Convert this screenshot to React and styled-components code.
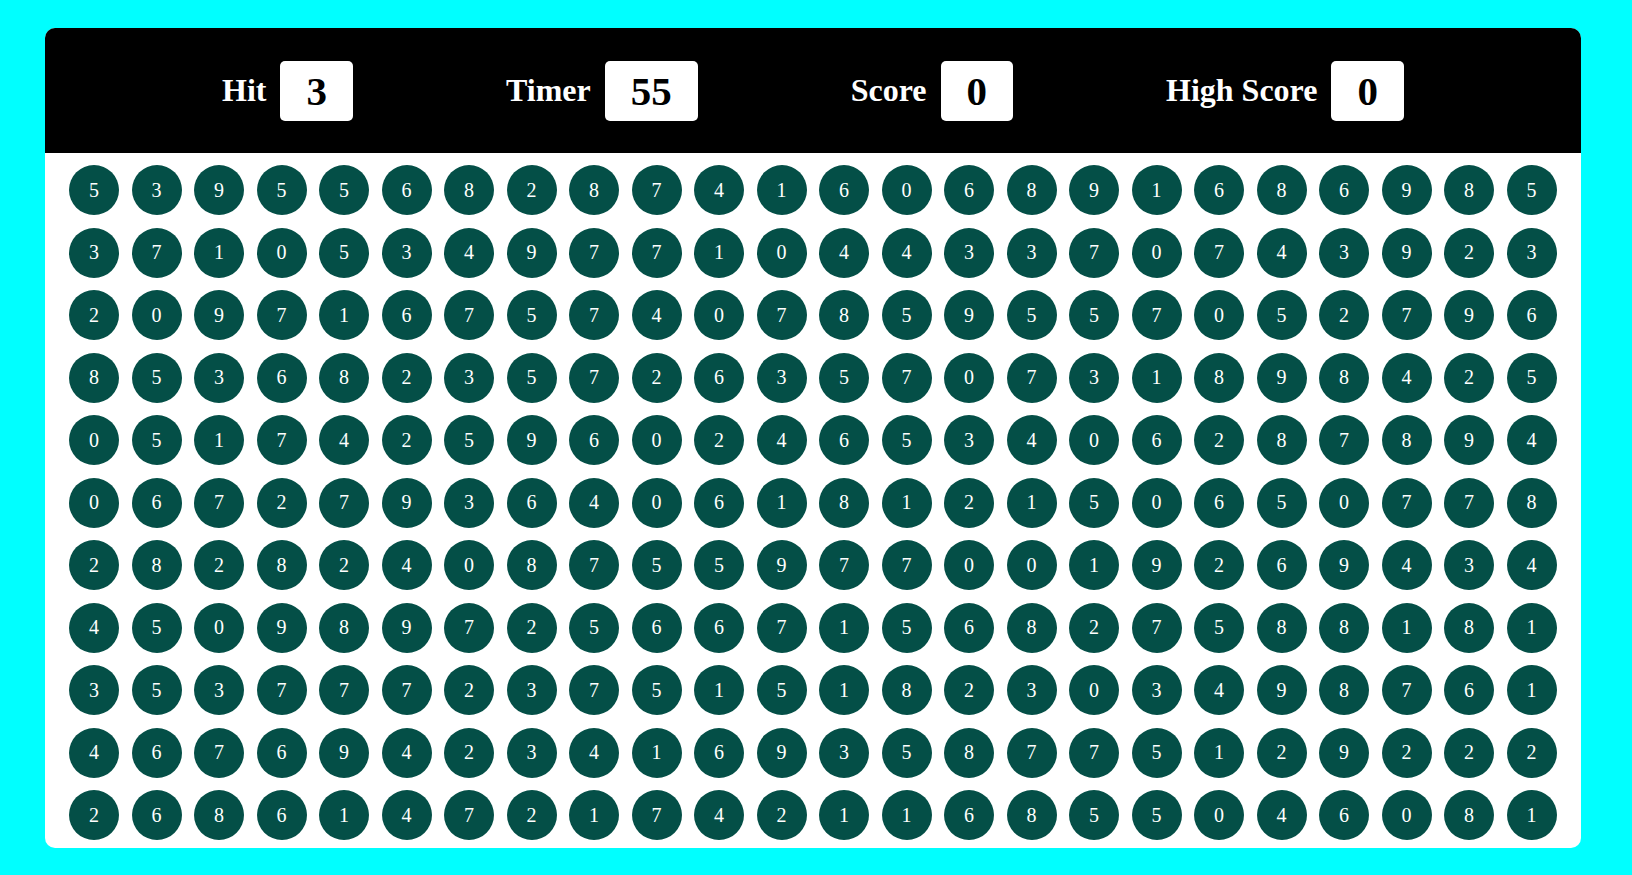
import React from "react";
import styled, { createGlobalStyle } from "styled-components";

const GlobalStyle = createGlobalStyle`
  * {
    box-sizing: border-box;
  }
  body {
    margin: 0;
    background: #00ffff;
    font-family: "Liberation Serif", "Times New Roman", serif;
  }
`;

const rows = [
  "539556828741606891686985",
  "371053497710443370743923",
  "209716757407859557052796",
  "853682357263570731898425",
  "051742596024653406287894",
  "067279364061812150650778",
  "282824087559770019269434",
  "450989725667156827588181",
  "353777237515182303498761",
  "467694234169358775129222",
  "268614721742116855046081",
];

const stats = [
  { label: "Hit", value: 3 },
  { label: "Timer", value: 55 },
  { label: "Score", value: 0 },
  { label: "High Score", value: 0 },
];

export default function App() {
  return (
    <>
      <GlobalStyle />
      <Page>
        <Panel>
          <Header>
            {stats.map((s) => (
              <Stat key={s.label}>
                <Label>{s.label}</Label>
                <Value>{s.value}</Value>
              </Stat>
            ))}
          </Header>
          <Board>
            {rows.map((row, r) =>
              row.split("").map((d, c) => <Bubble key={`${r}-${c}`}>{d}</Bubble>)
            )}
          </Board>
        </Panel>
      </Page>
    </>
  );
}

const Page = styled.div`
  padding: 28px 0 0 45px;
  height: 875px;
`;

const Panel = styled.div`
  width: 1536px;
  height: 820px;
  background: #fff;
  border-radius: 10px;
  overflow: hidden;
  display: flex;
  flex-direction: column;
`;

const Header = styled.div`
  height: 125px;
  flex-shrink: 0;
  background: #000;
  display: flex;
  align-items: center;
  justify-content: center;
  gap: 153px;
`;

const Stat = styled.div`
  display: flex;
  align-items: center;
  gap: 14px;
`;

const Label = styled.span`
  color: #fff;
  font-size: 32px;
  font-weight: 700;
`;

const Value = styled.div`
  height: 60px;
  padding: 0 26px;
  background: #fff;
  border-radius: 5px;
  color: #000;
  font-size: 41px;
  font-weight: 700;
  display: flex;
  align-items: center;
  justify-content: center;
`;

const Board = styled.div`
  display: grid;
  grid-template-columns: repeat(24, 50px);
  gap: 12.5px;
  padding: 12px 24px 0;
`;

const Bubble = styled.div`
  width: 50px;
  height: 50px;
  border-radius: 50%;
  background: #044f47;
  color: #fff;
  font-size: 20px;
  display: flex;
  align-items: center;
  justify-content: center;
`;
